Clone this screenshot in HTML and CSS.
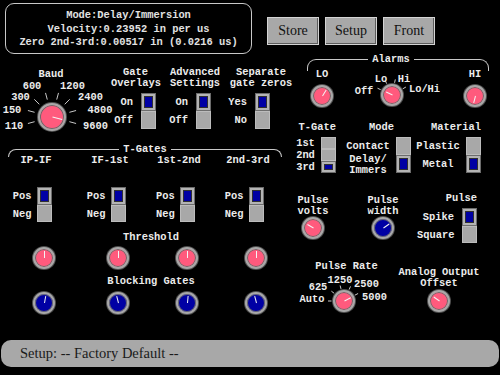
FILE: index.html
```html
<!DOCTYPE html>
<html lang="en">
<head>
<meta charset="UTF-8">
<title>Setup - Factory Default</title>
<link rel="stylesheet" href="styles.css">
</head>
<body>

<header class="top">
  <div class="readout">
    <p>Mode:Delay/Immersion</p>
    <p>Velocity:0.23952 in per us</p>
    <p>Zero 2nd-3rd:0.00517 in (0.0216 us)</p>
  </div>
  <div class="tabs">
    <button>Store</button>
    <button>Setup</button>
    <button>Front</button>
  </div>
</header>

<main class="panel">
  <div class="left">
    <div class="settings">
      <div class="dial baud">
        <svg width="111" height="66">
          <line x1="69.4" y1="54.7" x2="76.1" y2="56.5"/>
          <line x1="69.4" y1="45.3" x2="76.1" y2="43.5"/>
          <line x1="64.7" y1="37.3" x2="69.7" y2="32.3"/>
          <line x1="56.7" y1="32.6" x2="58.5" y2="25.9"/>
          <line x1="47.3" y1="32.6" x2="45.5" y2="25.9"/>
          <line x1="39.3" y1="37.3" x2="34.3" y2="32.3"/>
          <line x1="34.6" y1="45.3" x2="27.9" y2="43.5"/>
          <line x1="34.6" y1="54.7" x2="27.9" y2="56.5"/>
          <text x="51" y="9.5">Baud</text>
          <text x="32" y="21.5">600</text>
          <text x="72.5" y="21.5">1200</text>
          <text x="20.5" y="32.5">300</text>
          <text x="90.5" y="32.5">2400</text>
          <text x="12" y="45.5">150</text>
          <text x="100" y="45.5">4800</text>
          <text x="14" y="61.5">110</text>
          <text x="95.5" y="61.5">9600</text>
        </svg>
        <div class="knob big" style="--a:105deg"></div>
      </div>

      <div class="toggle gate">
        <h3>Gate<br>Overlays</h3>
        <div class="sw-row">
          <div class="opts"><span>On</span><span>Off</span></div>
          <div class="switch"><i class="on"></i><i></i></div>
        </div>
      </div>

      <div class="toggle adv">
        <h3>Advanced<br>Settings</h3>
        <div class="sw-row">
          <div class="opts"><span>On</span><span>Off</span></div>
          <div class="switch"><i class="on"></i><i></i></div>
        </div>
      </div>

      <div class="toggle sep">
        <h3>Separate<br>gate zeros</h3>
        <div class="sw-row">
          <div class="opts"><span>Yes</span><span>No</span></div>
          <div class="switch"><i class="on"></i><i></i></div>
        </div>
      </div>
    </div>

    <section class="tgates">
      <div class="bracket"><span>T-Gates</span></div>
      <div class="gate-grid">
        <div class="col-label">IP-IF</div>
        <div class="col-label">IF-1st</div>
        <div class="col-label">1st-2nd</div>
        <div class="col-label">2nd-3rd</div>

        <div class="polarity">
          <div class="opts"><span>Pos</span><span>Neg</span></div>
          <div class="switch s35"><i class="on"></i><i></i></div>
        </div>
        <div class="polarity">
          <div class="opts"><span>Pos</span><span>Neg</span></div>
          <div class="switch s35"><i class="on"></i><i></i></div>
        </div>
        <div class="polarity">
          <div class="opts"><span>Pos</span><span>Neg</span></div>
          <div class="switch s35"><i class="on"></i><i></i></div>
        </div>
        <div class="polarity">
          <div class="opts"><span>Pos</span><span>Neg</span></div>
          <div class="switch s35"><i class="on"></i><i></i></div>
        </div>

        <h3 class="row-head threshold">Threshold</h3>
        <div class="knob" style="--a:0deg"></div>
        <div class="knob" style="--a:0deg"></div>
        <div class="knob" style="--a:0deg"></div>
        <div class="knob" style="--a:0deg"></div>

        <h3 class="row-head blocking">Blocking Gates</h3>
        <div class="knob blue" style="--a:10deg"></div>
        <div class="knob blue" style="--a:345deg"></div>
        <div class="knob blue" style="--a:5deg"></div>
        <div class="knob blue" style="--a:345deg"></div>
      </div>
    </section>
  </div>

  <div class="right">
    <section class="alarms">
      <div class="bracket"><span>Alarms</span></div>
      <div class="alarm-row">
        <div class="knob-item lo">
          <h3>LO</h3>
          <div class="knob" style="--a:32deg"></div>
        </div>
        <div class="dial mode-dial">
          <svg width="88" height="40">
            <line x1="27.7" y1="21.7" x2="24.5" y2="20.2"/>
            <line x1="33.7" y1="15.7" x2="32.2" y2="12.5"/>
            <line x1="41.6" y1="14.8" x2="42.3" y2="11.4"/>
            <line x1="49.8" y1="20.8" x2="52.9" y2="19"/>
            <text x="11" y="25.5">Off</text>
            <text x="28" y="13.5">Lo</text>
            <text x="51" y="13.5">Hi</text>
            <text x="71.5" y="23.5">Lo/Hi</text>
          </svg>
          <div class="knob" style="--a:295deg"></div>
        </div>
        <div class="knob-item hi">
          <h3>HI</h3>
          <div class="knob" style="--a:195deg"></div>
        </div>
      </div>
    </section>

    <div class="selectors">
      <div class="sel tgate-sel">
        <h3>T-Gate</h3>
        <div class="sw-row">
          <div class="opts"><span>1st</span><span>2nd</span><span>3rd</span></div>
          <div class="switch tri"><i></i><i></i><i class="on"></i></div>
        </div>
      </div>
      <div class="sel mode-sel">
        <h3>Mode</h3>
        <div class="sw-row">
          <div class="opts"><span>Contact</span><span class="two">Delay/<br>Immers</span></div>
          <div class="switch"><i></i><i class="on"></i></div>
        </div>
      </div>
      <div class="sel material">
        <h3>Material</h3>
        <div class="sw-row">
          <div class="opts"><span>Plastic</span><span>Metal</span></div>
          <div class="switch"><i></i><i class="on"></i></div>
        </div>
      </div>
    </div>

    <div class="pulse-row">
      <div class="knob-item volts">
        <h3>Pulse<br>volts</h3>
        <div class="knob" style="--a:300deg"></div>
      </div>
      <div class="knob-item width">
        <h3>Pulse<br>width</h3>
        <div class="knob blue" style="--a:55deg"></div>
      </div>
      <div class="sel pulse-sel">
        <h3>Pulse</h3>
        <div class="sw-row">
          <div class="opts"><span>Spike</span><span>Square</span></div>
          <div class="switch s35"><i class="on"></i><i></i></div>
        </div>
      </div>
    </div>

    <div class="rate-row">
      <div class="rate">
        <h3>Pulse Rate</h3>
        <div class="dial rate-dial">
          <svg width="92" height="42">
            <line x1="33.5" y1="29" x2="30" y2="29"/>
            <line x1="36.2" y1="21.3" x2="33.4" y2="19.2"/>
            <line x1="43" y1="16.9" x2="42.1" y2="13.5"/>
            <line x1="51.1" y1="17.6" x2="52.5" y2="14.4"/>
            <line x1="57" y1="23.1" x2="60.1" y2="21.5"/>
            <text x="14" y="29.5">Auto</text>
            <text x="20" y="17.5">625</text>
            <text x="42" y="10.5">1250</text>
            <text x="68.5" y="14.5">2500</text>
            <text x="76.5" y="27.5">5000</text>
          </svg>
          <div class="knob" style="--a:62deg"></div>
        </div>
      </div>
      <div class="knob-item offset">
        <h3>Analog Output<br>Offset</h3>
        <div class="knob" style="--a:305deg"></div>
      </div>
    </div>
  </div>
</main>

<footer class="status">Setup: -- Factory Default --</footer>

</body>
</html>
```

FILE: styles.css
```css
* {
  box-sizing: border-box;
}
body {
  margin: 0;
  width: 500px;
  height: 375px;
  overflow: hidden;
  background-color: #000;
  color: #ececec;
  font: bold 10.4px/12px "Liberation Mono", monospace;
}
h3 {
  margin: 0;
  font: inherit;
}

/* top readout + buttons */
.top {
  display: flex;
  align-items: flex-start;
  height: 54px;
  padding: 3px 0 0 5px;
}
.readout {
  width: 247px;
  height: 51px;
  border: 1px solid #c8c8c8;
  border-radius: 9px;
  padding-top: 5px;
  text-align: center;
  color: #e2e2e2;
}
.readout p {
  margin: 0;
  line-height: 13.5px;
}
.tabs {
  display: flex;
  gap: 6px;
  margin: 14px 0 0 15px;
}
.tabs button {
  width: 52px;
  height: 28px;
  padding: 0;
  background-color: #a8a8a8;
  border: 1px solid #d4d4d4;
  box-shadow: inset -1px -1px 0 #5c5c5c;
  font: 14px "Liberation Serif", serif;
  color: #111;
}

.panel {
  display: flex;
  height: 286px;
}
.left {
  width: 294px;
}
.right {
  flex: 1;
}

/* knobs and switches */
.knob {
  position: relative;
  flex: none;
  width: 22px;
  height: 22px;
  border-radius: 50%;
  border: 2px solid #a8a8a8;
  box-shadow: 0 0 0 1px #505050, inset 0 0 0 1px #6a6a6a;
  background-color: #ff5a7d;
}
.knob.blue {
  background-color: #0000a4;
}
.knob.big {
  width: 28px;
  height: 28px;
}
.knob::after {
  content: "";
  position: absolute;
  left: calc(50% - 0.5px);
  bottom: 50%;
  width: 1px;
  height: 7px;
  background-color: #f4f4f4;
  transform-origin: 50% 100%;
  transform: rotate(var(--a, 0deg));
}
.knob.big::after {
  height: 10px;
}

.switch {
  display: flex;
  flex-direction: column;
  flex: none;
  width: 15px;
}
.switch i {
  display: block;
  height: 18px;
  background-color: #a8a8a8;
  box-shadow: inset 0 0 0 1px #bcbcbc;
}
.switch i.on {
  background-color: #0000a4;
  box-shadow: inset 0 0 0 1px #6c6c6c, inset 0 0 0 3px #b4b4b4, inset 0 0 0 4px #303030;
}
.switch.s35 i:last-child {
  height: 17px;
}
.switch.tri i {
  height: 12px;
}

.sw-row {
  display: flex;
  justify-content: flex-end;
  gap: 8px;
  margin-top: 4px;
}
.opts {
  display: flex;
  flex-direction: column;
  text-align: right;
}
.opts span {
  display: block;
  height: 18px;
  line-height: 18px;
  white-space: nowrap;
}
.opts span.two {
  margin-top: -1px;
  line-height: 11px;
}

/* dials with tick marks */
.dial {
  position: relative;
  flex: none;
}
.dial svg {
  display: block;
  overflow: visible;
}
.dial line {
  stroke: #c8c8c8;
  stroke-width: 1;
}
.dial text {
  fill: #ececec;
  text-anchor: middle;
  font: bold 10.4px "Liberation Mono", monospace;
}
.dial .knob {
  position: absolute;
}

.bracket {
  display: flex;
  justify-content: center;
  height: 8px;
  border: 1px solid #c8c8c8;
  border-bottom: 0;
  border-radius: 9px 9px 0 0;
}
.bracket span {
  height: 12px;
  margin-top: -7px;
  padding: 0 4px;
  background-color: #000;
}

/* left: settings row */
.settings {
  display: flex;
  align-items: flex-start;
  height: 66px;
  margin-top: 13px;
}
.baud {
  width: 111px;
  height: 66px;
}
.baud .knob {
  left: 38px;
  top: 36px;
}
.toggle {
  display: flex;
  flex-direction: column;
  flex: none;
}
.toggle h3 {
  line-height: 11px;
  text-align: center;
  white-space: nowrap;
}
.gate {
  width: 49px;
}
.gate .sw-row {
  padding-right: 4px;
}
.adv {
  width: 49px;
  margin-left: 10px;
}
.adv .sw-row {
  padding-right: 8px;
}
.sep {
  width: 64px;
  margin-left: 10px;
}
.sep .sw-row {
  padding-right: 23px;
}

/* left: T-Gates */
.tgates {
  margin-top: 16px;
}
.tgates .bracket {
  width: 274px;
  margin-left: 8px;
}
.gate-grid {
  display: grid;
  grid-template-columns: 72px 76px 62px 76px;
  margin: -3px 0 0 8px;
}
.col-label {
  text-align: center;
  padding-right: 16px;
}
.polarity {
  display: grid;
  grid-template-columns: 1fr 15px 1fr;
  margin-top: 21px;
}
.polarity .opts {
  padding-right: 5px;
}
.row-head {
  grid-column: 1 / -1;
  text-align: center;
}
.threshold {
  margin-top: 8px;
}
.blocking {
  margin-top: 6px;
}
.gate-grid > .knob {
  justify-self: center;
  margin-top: 4px;
}
.gate-grid > .knob.blue {
  margin-top: 5px;
}

/* right: alarms */
.alarms {
  margin-top: 5px;
}
.alarms .bracket {
  width: 182px;
  height: 12px;
  margin-left: 13px;
}
.alarms .bracket span {
  margin-right: 14px;
}
.alarm-row {
  display: flex;
  align-items: flex-start;
  height: 40px;
  margin-top: -3px;
}
.knob-item {
  display: flex;
  flex-direction: column;
  align-items: center;
  flex: none;
  text-align: center;
}
.lo, .hi {
  width: 24px;
}
.lo .knob, .hi .knob {
  margin-top: 5px;
}
.lo {
  margin-left: 16px;
}
.mode-dial {
  width: 88px;
  height: 40px;
  margin-left: 19px;
}
.mode-dial .knob {
  left: 28px;
  top: 16px;
}
.hi {
  margin-left: 22px;
}

/* right: selectors */
.selectors {
  display: flex;
  align-items: flex-start;
  margin-top: 13px;
}
.sel {
  display: flex;
  flex-direction: column;
  flex: none;
}
.sel h3 {
  text-align: right;
}
.sel .sw-row {
  justify-content: flex-start;
  gap: 6px;
}
.sel .opts {
  text-align: center;
}
.tgate-sel {
  margin-left: 2px;
}
.tgate-sel .opts {
  width: 19px;
}
.tgate-sel .opts span {
  height: 12px;
  line-height: 12px;
}
.mode-sel {
  margin-left: 10px;
}
.mode-sel h3 {
  padding-right: 17px;
}
.mode-sel .opts, .material .opts {
  width: 44px;
}
.material {
  margin-left: 5px;
}

/* right: pulse */
.pulse-row {
  display: flex;
  align-items: flex-start;
  height: 48px;
  margin-top: 22px;
}
.pulse-row .knob-item h3 {
  line-height: 11px;
}
.volts {
  width: 32px;
  margin-left: 3px;
}
.width {
  width: 32px;
  margin-left: 38px;
}
.pulse-sel {
  margin: -3px 0 0 18px;
}
.pulse-sel .sw-row {
  gap: 8px;
}
.pulse-sel .opts {
  width: 37px;
  text-align: right;
}

.rate-row {
  display: flex;
  align-items: flex-start;
  margin-top: 17px;
}
.rate {
  display: flex;
  flex-direction: column;
  margin-left: 4px;
}
.rate h3 {
  text-align: center;
  padding-left: 5px;
}
.rate-dial {
  width: 92px;
  height: 42px;
}
.rate-dial .knob {
  left: 35px;
  top: 18px;
}
.offset {
  width: 82px;
  margin: 7px 0 0 8px;
}
.offset h3 {
  line-height: 11px;
  white-space: nowrap;
}
.offset .knob {
  margin-top: 1px;
}

.status {
  height: 27px;
  margin: 0 1px;
  padding-left: 19px;
  border-radius: 10px;
  background-color: #a8a8a8;
  color: #1a1a1a;
  font: 14.5px/27px "Liberation Serif", serif;
}
```
